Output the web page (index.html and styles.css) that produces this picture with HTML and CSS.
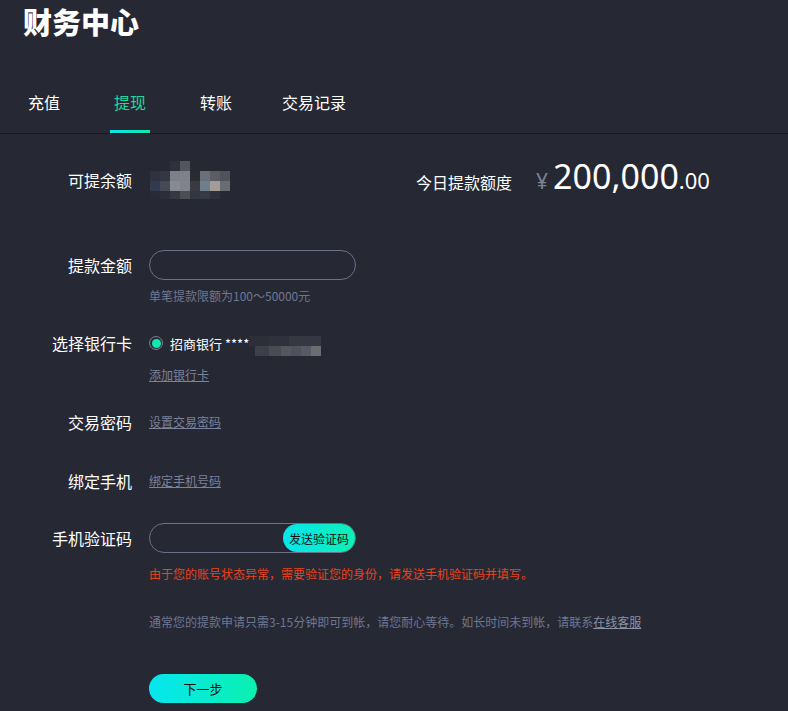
FILE: index.html
```html
<!DOCTYPE html>
<html lang="zh-CN">
<head>
<meta charset="utf-8">
<title>财务中心</title>
<link rel="stylesheet" href="styles.css">
</head>
<body>
<header class="header">
  <h1 class="title">财务中心</h1>
  <nav class="tabs">
    <a class="tab">充值</a>
    <a class="tab active">提现</a>
    <a class="tab">转账</a>
    <a class="tab">交易记录</a>
  </nav>
</header>
<main class="form">
  <section class="row row-balance">
    <div class="label">可提余额</div>
    <div class="balance">
      <svg class="mosaic" width="81" height="38" viewBox="0 0 81 38">
        <rect x="21" y="0" width="10" height="10" fill="#2e313b"/>
        <rect x="31" y="0" width="10" height="10" fill="#54565e"/>
        <rect x="1" y="10" width="10" height="10" fill="#30333f"/>
        <rect x="11" y="10" width="10" height="10" fill="#353844"/>
        <rect x="21" y="10" width="10" height="10" fill="#7d8088"/>
        <rect x="31" y="10" width="10" height="10" fill="#7e8189"/>
        <rect x="41" y="10" width="10" height="10" fill="#2a2b31"/>
        <rect x="51" y="10" width="10" height="10" fill="#697079"/>
        <rect x="61" y="10" width="10" height="10" fill="#5b5d65"/>
        <rect x="71" y="10" width="10" height="10" fill="#515359"/>
        <rect x="1" y="20" width="10" height="10" fill="#323a50"/>
        <rect x="11" y="20" width="10" height="10" fill="#464a56"/>
        <rect x="21" y="20" width="10" height="10" fill="#878a92"/>
        <rect x="31" y="20" width="10" height="10" fill="#80838c"/>
        <rect x="41" y="20" width="10" height="10" fill="#3a3b42"/>
        <rect x="51" y="20" width="10" height="10" fill="#6e7e8a"/>
        <rect x="61" y="20" width="10" height="10" fill="#a49a98"/>
        <rect x="71" y="20" width="10" height="10" fill="#6a6c73"/>
        <rect x="1" y="30" width="10" height="8" fill="#282b36"/>
        <rect x="11" y="30" width="10" height="8" fill="#2b2e39"/>
        <rect x="21" y="30" width="10" height="8" fill="#363943"/>
        <rect x="31" y="30" width="10" height="8" fill="#4c4d55"/>
        <rect x="41" y="30" width="10" height="8" fill="#333640"/>
        <rect x="51" y="30" width="10" height="8" fill="#363a47"/>
        <rect x="61" y="30" width="10" height="8" fill="#2e313c"/>
      </svg>
      <div class="limit">
        <span class="limit-label">今日提款额度</span>
        <span class="yen">¥</span>
        <span class="amount">200,000<small>.00</small></span>
      </div>
    </div>
  </section>

  <section class="row row-amount">
    <div class="label">提款金额</div>
    <div class="field"><input class="input-text" type="text"></div>
    <div class="hint">单笔提款限额为100～50000元</div>
  </section>

  <section class="row row-card">
    <div class="label">选择银行卡</div>
    <div class="card">
      <span class="radio"><span class="dot"></span></span>
      <span class="card-name">招商银行 ******</span>
      <svg class="mosaic2" width="72" height="20" viewBox="0 0 72 20">
        <rect x="0" y="0" width="20" height="10" fill="#2c2e39"/>
        <rect x="20" y="0" width="20" height="10" fill="#2f313c"/>
        <rect x="40" y="0" width="32" height="10" fill="#353742"/>
        <rect x="6" y="10" width="14" height="10" fill="#3e4049"/>
        <rect x="20" y="10" width="12" height="10" fill="#4a4c55"/>
        <rect x="32" y="10" width="10" height="10" fill="#55575f"/>
        <rect x="42" y="10" width="10" height="10" fill="#4f525b"/>
        <rect x="52" y="10" width="10" height="10" fill="#575a64"/>
        <rect x="62" y="10" width="10" height="10" fill="#6c6c72"/>
      </svg>
    </div>
    <a class="link add-card">添加银行卡</a>
  </section>

  <section class="row row-pwd">
    <div class="label">交易密码</div>
    <a class="link">设置交易密码</a>
  </section>

  <section class="row row-phone">
    <div class="label">绑定手机</div>
    <a class="link">绑定手机号码</a>
  </section>

  <section class="row row-code">
    <div class="label">手机验证码</div>
    <div class="field code-field">
      <input class="input-code" type="text">
      <button class="send">发送验证码</button>
    </div>
    <div class="error">由于您的账号状态异常，需要验证您的身份，请发送手机验证码并填写。</div>
    <div class="info">通常您的提款申请只需3-15分钟即可到帐，请您耐心等待。如长时间未到帐，请联系<a class="service">在线客服</a></div>
    <div class="submit-wrap"><button class="submit">下一步</button></div>
  </section>
</main>
</body>
</html>
```

FILE: styles.css
```css
html, body {
  margin: 0;
  padding: 0;
  background: #262834;
  color: #ffffff;
  font-family: "Noto Sans CJK SC", "Noto Sans", sans-serif;
  height: 711px;
  overflow: hidden;
}

.header {
  border-bottom: 1px solid #17181f;
}

.title {
  margin: 0;
  padding: 3px 0 0 23px;
  height: 82px;
  box-sizing: border-box;
  font-size: 29px;
  line-height: 36px;
  font-weight: 900;
  letter-spacing: 0;
  color: #ffffff;
}

.tabs {
  display: flex;
  gap: 46px;
  padding-left: 24px;
}

.tab {
  position: relative;
  display: block;
  padding: 9px 4px 0;
  height: 51px;
  box-sizing: border-box;
  font-size: 16px;
  line-height: 22px;
  color: #ffffff;
}

.tab:last-child {
  margin-left: -4px;
}

.tab.active {
  color: #1fd6a0;
}

.tab.active::after {
  content: "";
  position: absolute;
  left: 0;
  right: 0;
  bottom: 0;
  height: 3px;
  background: linear-gradient(90deg, #0de4ee, #0fe9a8);
}

.form {
  display: flex;
  flex-direction: column;
}

.row {
  display: grid;
  grid-template-columns: 132px 1fr;
  column-gap: 17px;
  align-items: center;
}

.row > :not(.label) {
  grid-column: 2;
}

.label {
  grid-column: 1;
  grid-row: 1;
  text-align: right;
  font-size: 16px;
  line-height: 20px;
  color: #ffffff;
}

.row-balance {
  margin-top: 26px;
  height: 40px;
}

.balance {
  display: grid;
  grid-template-columns: 267px auto;
  align-items: center;
}

.mosaic {
  display: block;
}

.limit {
  display: flex;
  align-items: baseline;
  margin-top: -4px;
}

.limit-label {
  font-size: 16px;
  color: #ffffff;
}

.yen {
  margin-left: 24px;
  font-size: 21px;
  color: #7a8096;
  font-family: "Noto Sans", sans-serif;
}

.amount {
  margin-left: 5px;
  font-family: "Noto Sans", sans-serif;
  font-size: 34px;
  line-height: 40px;
  color: #ffffff;
}

.amount small {
  font-size: 22px;
}

.row-amount {
  margin-top: 50px;
}

.field {
  grid-row: 1;
  width: 207px;
  height: 30px;
  box-sizing: border-box;
  border: 1px solid #6d7187;
  border-radius: 15px;
  display: flex;
  align-items: center;
}

.field input {
  flex: 1;
  min-width: 0;
  height: 100%;
  border: 0;
  outline: none;
  background: transparent;
  color: #ffffff;
  padding: 0 14px;
  font-family: inherit;
}

.hint {
  margin-top: 7px;
  font-size: 12px;
  line-height: 18px;
  color: #6f7791;
}

.row-card {
  margin-top: 28px;
}

.card {
  grid-row: 1;
  display: flex;
  align-items: center;
  height: 20px;
}

.radio {
  width: 14px;
  height: 14px;
  box-sizing: border-box;
  border: 1.5px solid #7c8093;
  border-radius: 50%;
  display: flex;
  align-items: center;
  justify-content: center;
}

.dot {
  width: 9px;
  height: 9px;
  border-radius: 50%;
  background: #0fe8b0;
}

.card-name {
  margin-left: 7px;
  font-size: 13px;
  color: #ffffff;
  white-space: nowrap;
}

.mosaic2 {
  display: block;
  margin-left: -12px;
  margin-top: 6px;
}

.link {
  font-size: 12px;
  line-height: 18px;
  color: #7b829b;
  text-decoration: underline;
  justify-self: start;
  cursor: pointer;
}

.add-card {
  margin-top: 13px;
}

.row-pwd {
  margin-top: 28px;
  height: 20px;
}

.row-phone {
  margin-top: 39px;
  height: 20px;
}

.row-code {
  margin-top: 32px;
}

.send {
  width: 72px;
  height: 28px;
  border: 0;
  border-radius: 14px;
  background: linear-gradient(90deg, #08e4ee, #0ef0b4);
  color: #111111;
  font-family: inherit;
  font-size: 12px;
  padding: 0;
  flex: none;
}

.error {
  margin-top: 12px;
  font-size: 12px;
  line-height: 18px;
  color: #e8431c;
}

.info {
  margin-top: 30px;
  font-size: 12px;
  line-height: 18px;
  color: #6f7791;
  white-space: nowrap;
}

.service {
  color: #8a91a8;
  text-decoration: underline;
}

.submit-wrap {
  margin-top: 43px;
}

.submit {
  display: block;
  width: 108px;
  height: 29px;
  border: 0;
  border-radius: 15px;
  background: linear-gradient(90deg, #06e6f0, #0af0b0);
  color: #111111;
  font-family: inherit;
  font-size: 13px;
  padding: 0;
}
```
